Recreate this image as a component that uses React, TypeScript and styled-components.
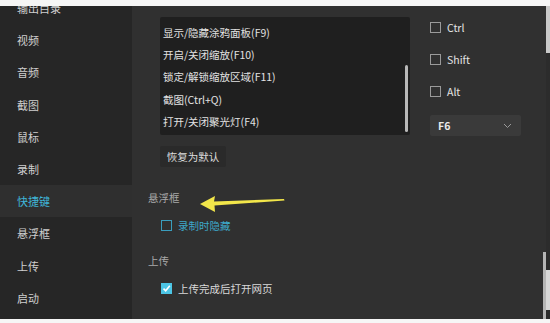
import React from "react";
import styled, { createGlobalStyle } from "styled-components";

const GlobalStyle = createGlobalStyle`
  html, body {
    margin: 0;
    padding: 0;
    background: #f4f4f4;
  }
  body {
    font-family: "Noto Sans CJK SC", "Noto Sans", "Liberation Sans", sans-serif;
    font-size: 11px;
  }
`;

const Frame = styled.div`
  width: 550px;
  height: 323px;
  display: flex;
  flex-direction: column;
  background: #f4f4f4;
  overflow: hidden;
`;

const Strip = styled.div<{ h: number }>`
  height: ${(p) => p.h}px;
  flex-shrink: 0;
  background: #f6f6f6;
`;

const Body = styled.div`
  flex: 1;
  display: flex;
  min-height: 0;
  position: relative;
`;

const Sidebar = styled.nav`
  width: 132px;
  flex-shrink: 0;
  background: #262626;
  overflow: hidden;
`;

const NavList = styled.ul`
  list-style: none;
  margin: -14px 0 0;
  padding: 0;
`;

const NavItem = styled.li<{ active?: boolean }>`
  height: 32.2px;
  display: flex;
  align-items: center;
  padding-left: 17px;
  color: ${(p) => (p.active ? "#3fb6d9" : "#cfcfcf")};
  background: ${(p) => (p.active ? "#2f2f2f" : "transparent")};
  font-size: 11px;
`;

const Main = styled.main`
  flex: 1;
  background: #303030;
  padding: 11px 0 0 16px;
  display: flex;
  flex-direction: column;
  position: relative;
`;

const ShortcutBlock = styled.div`
  padding-left: 12px;
  display: flex;
  gap: 20px;
`;

const LeftCol = styled.div`
  display: flex;
  flex-direction: column;
  gap: 11px;
`;

const ListBox = styled.div`
  width: 250px;
  height: 118px;
  background: #1f1f1f;
  border-radius: 2px;
  position: relative;
  display: flex;
  flex-direction: column;
  padding: 4px 0 0 3px;
  box-sizing: border-box;
`;

const ListRow = styled.div`
  height: 22.3px;
  display: flex;
  align-items: center;
  color: #e2e2e2;
  font-size: 10.5px;
`;

const ListThumb = styled.div`
  position: absolute;
  right: 2px;
  top: 48px;
  width: 3px;
  height: 67px;
  border-radius: 2px;
  background: #b8b8b8;
`;

const ResetButton = styled.button`
  width: 66px;
  height: 21px;
  border: none;
  border-radius: 2px;
  background: #2a2a2a;
  color: #dedede;
  font-family: inherit;
  font-size: 10.5px;
  padding: 0;
`;

const RightCol = styled.div`
  display: flex;
  flex-direction: column;
  padding-top: 0;
`;

const KeyRow = styled.label`
  height: 32px;
  display: flex;
  align-items: center;
  gap: 6px;
  color: #e4e4e4;
  font-size: 10.5px;
  margin-top: -6px;
  margin-bottom: 6px;
`;

const Box = styled.span<{ tone?: "plain" | "accent" | "checked" }>`
  width: 9px;
  height: 9px;
  flex-shrink: 0;
  border: 1px solid
    ${(p) => (p.tone === "accent" ? "#3a9dbd" : p.tone === "checked" ? "#4cc5e5" : "#9a9a9a")};
  background: ${(p) => (p.tone === "checked" ? "#4cc5e5" : "transparent")};
  display: inline-flex;
  align-items: center;
  justify-content: center;
`;

const Select = styled.div`
  width: 91px;
  height: 21px;
  margin-top: 2px;
  background: #3a3a3a;
  border-radius: 2px;
  display: flex;
  align-items: center;
  justify-content: space-between;
  padding: 0 9px 0 8px;
  box-sizing: border-box;
  color: #eaeaea;
  font-size: 10.5px;
  font-weight: 600;
`;

const SectionTitle = styled.div<{ top: number }>`
  margin-top: ${(p) => p.top}px;
  color: #a9a9a9;
  font-size: 10.5px;
  height: 14px;
  line-height: 14px;
`;

const OptionRow = styled.label<{ accent?: boolean; top: number }>`
  margin-top: ${(p) => p.top}px;
  padding-left: 13px;
  display: flex;
  align-items: center;
  gap: 6px;
  height: 14px;
  color: ${(p) => (p.accent ? "#3ea8c9" : "#d9d9d9")};
  font-size: 10.5px;
`;

const EdgeBar = styled.div`
  width: 4px;
  flex-shrink: 0;
  background: #2c2c2c;
  position: relative;
`;

const EdgeThumb = styled.div<{ top: number; h: number; c: string }>`
  position: absolute;
  left: 0;
  right: 0;
  top: ${(p) => p.top}px;
  height: ${(p) => p.h}px;
  background: ${(p) => p.c};
`;

const MainThumb = styled.div`
  position: absolute;
  right: 0;
  top: 246px;
  width: 3px;
  bottom: 0;
  background: #b5b5b5;
`;

const ArrowSvg = styled.svg`
  position: absolute;
  left: 194px;
  top: 182px;
  pointer-events: none;
`;

const Check = () => (
  <svg width="9" height="9" viewBox="0 0 9 9">
    <path d="M1.5 4.6 L3.7 6.8 L7.8 1.8" fill="none" stroke="#fff" strokeWidth="1.6" />
  </svg>
);

const Chevron = () => (
  <svg width="9" height="6" viewBox="0 0 9 6">
    <path d="M1 1 L4.5 4.5 L8 1" fill="none" stroke="#9a9a9a" strokeWidth="1" />
  </svg>
);

const navItems = ["输出目录", "视频", "音频", "截图", "鼠标", "录制", "快捷键", "悬浮框", "上传", "启动"];

const shortcuts = [
  "显示/隐藏涂鸦面板(F9)",
  "开启/关闭缩放(F10)",
  "锁定/解锁缩放区域(F11)",
  "截图(Ctrl+Q)",
  "打开/关闭聚光灯(F4)",
];

export default function App() {
  return (
    <Frame>
      <GlobalStyle />
      <Strip h={6} />
      <Body>
        <Sidebar>
          <NavList>
            {navItems.map((item) => (
              <NavItem key={item} active={item === "快捷键"}>
                {item}
              </NavItem>
            ))}
          </NavList>
        </Sidebar>
        <Main>
          <ShortcutBlock>
            <LeftCol>
              <ListBox>
                {shortcuts.map((s) => (
                  <ListRow key={s}>{s}</ListRow>
                ))}
                <ListThumb />
              </ListBox>
              <ResetButton>恢复为默认</ResetButton>
            </LeftCol>
            <RightCol>
              {["Ctrl", "Shift", "Alt"].map((k) => (
                <KeyRow key={k}>
                  <Box />
                  {k}
                </KeyRow>
              ))}
              <Select>
                F6
                <Chevron />
              </Select>
            </RightCol>
          </ShortcutBlock>
          <SectionTitle top={24}>悬浮框</SectionTitle>
          <OptionRow accent top={13}>
            <Box tone="accent" />
            录制时隐藏
          </OptionRow>
          <SectionTitle top={22}>上传</SectionTitle>
          <OptionRow top={13}>
            <Box tone="checked">
              <Check />
            </Box>
            上传完成后打开网页
          </OptionRow>
          <MainThumb />
        </Main>
        <EdgeBar>
          <EdgeThumb top={0} h={47} c="#c9c9c9" />
          <EdgeThumb top={264} h={40} c="#d8d8d8" />
        </EdgeBar>
        <ArrowSvg width="96" height="30" viewBox="0 0 96 30">
          <path
            d="M6 16 L21 8 L20 13.5 L90 11 L90.5 12.5 L20.5 17.5 L21 24 Z"
            fill="#f2e64a"
          />
        </ArrowSvg>
      </Body>
      <Strip h={4} />
    </Frame>
  );
}
